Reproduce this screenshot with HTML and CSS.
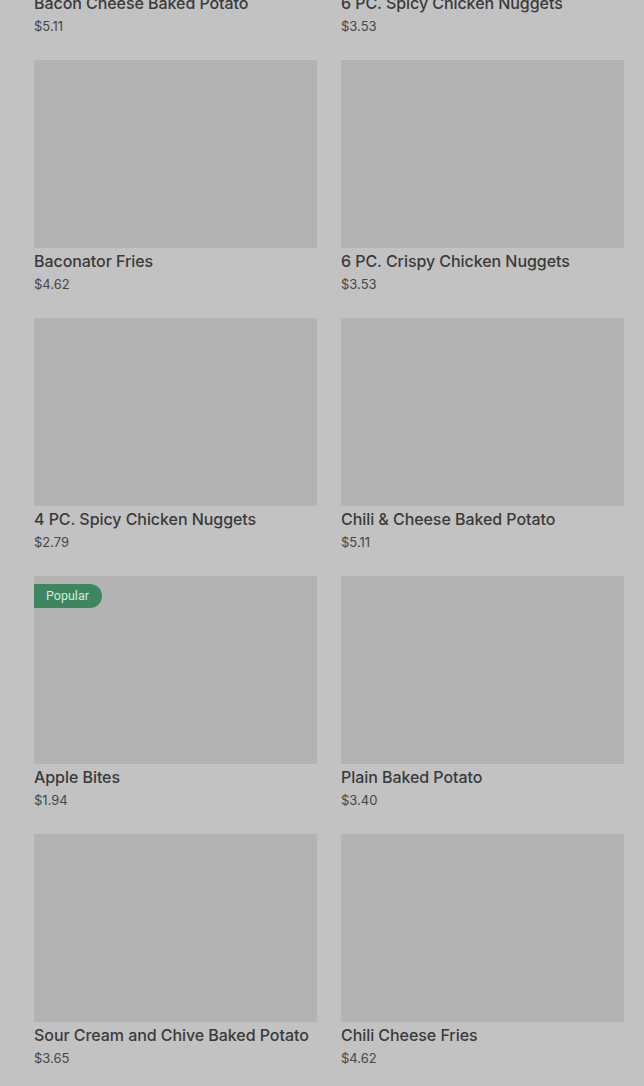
FILE: index.html
```html
<!DOCTYPE html>
<html lang="en">
<head>
  <meta charset="UTF-8">
  <meta name="viewport" content="width=device-width, initial-scale=1.0">
  <title>Menu - Sides</title>
  <link rel="stylesheet" href="styles.css">
</head>
<body>
  <div class="menu-grid">
    <div class="item">
      <div class="item-image"></div>
      <h3 class="item-name">Bacon Cheese Baked Potato</h3>
      <p class="item-price">$5.11</p>
    </div>
    <div class="item">
      <div class="item-image"></div>
      <h3 class="item-name">6 PC. Spicy Chicken Nuggets</h3>
      <p class="item-price">$3.53</p>
    </div>
    <div class="item">
      <div class="item-image"></div>
      <h3 class="item-name">Baconator Fries</h3>
      <p class="item-price">$4.62</p>
    </div>
    <div class="item">
      <div class="item-image"></div>
      <h3 class="item-name">6 PC. Crispy Chicken Nuggets</h3>
      <p class="item-price">$3.53</p>
    </div>
    <div class="item">
      <div class="item-image"></div>
      <h3 class="item-name">4 PC. Spicy Chicken Nuggets</h3>
      <p class="item-price">$2.79</p>
    </div>
    <div class="item">
      <div class="item-image"></div>
      <h3 class="item-name">Chili &amp; Cheese Baked Potato</h3>
      <p class="item-price">$5.11</p>
    </div>
    <div class="item">
      <div class="item-image">
        <span class="badge">Popular</span>
      </div>
      <h3 class="item-name">Apple Bites</h3>
      <p class="item-price">$1.94</p>
    </div>
    <div class="item">
      <div class="item-image"></div>
      <h3 class="item-name">Plain Baked Potato</h3>
      <p class="item-price">$3.40</p>
    </div>
    <div class="item">
      <div class="item-image"></div>
      <h3 class="item-name">Sour Cream and Chive Baked Potato</h3>
      <p class="item-price">$3.65</p>
    </div>
    <div class="item">
      <div class="item-image"></div>
      <h3 class="item-name">Chili Cheese Fries</h3>
      <p class="item-price">$4.62</p>
    </div>
  </div>
</body>
</html>
```

FILE: styles.css
```css
body {
  margin: 0;
  background-color: #c2c2c2;
  font-family: 'Inter', 'Roboto', sans-serif;
  color: #3b3b3b;
  overflow: hidden;
}

/* Menu grid */
.menu-grid {
  display: grid;
  grid-template-columns: 283px 283px;
  column-gap: 24px;
  row-gap: 24px;
  padding: 0 20px 0 34px;
  margin-top: -198px;
}

.item-image {
  position: relative;
  height: 188px;
  background-color: #b3b3b3;
}

.badge {
  position: absolute;
  top: 8px;
  left: 0;
  padding: 0 13px 0 12px;
  height: 24px;
  line-height: 24px;
  font-family: 'Roboto', sans-serif;
  font-size: 12.5px;
  color: #d9e8de;
  background-color: #3e8660;
  border-radius: 0 12px 12px 0;
}

.item-name {
  margin: 1px 0 0;
  font-size: 16px;
  font-weight: 500;
  line-height: 24px;
  letter-spacing: -0.06px;
  color: #3a3a3a;
  white-space: nowrap;
}

.item-price {
  margin: 1px 0 0;
  font-size: 13px;
  line-height: 20px;
  color: #474747;
}
```
